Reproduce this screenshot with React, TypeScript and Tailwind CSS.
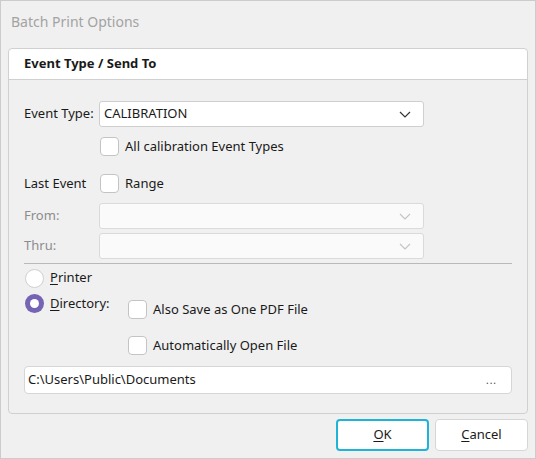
import React from "react";

const Chevron = ({ disabled }: { disabled?: boolean }) => (
  <svg width="12" height="7" viewBox="0 0 12 7" className="shrink-0">
    <path
      d="M1 1 L6 6 L11 1"
      fill="none"
      stroke={disabled ? "#c4c4c4" : "#333333"}
      strokeWidth="1.2"
    />
  </svg>
);

const Combo = ({ value, disabled }: { value?: string; disabled?: boolean }) => (
  <div
    className={`flex h-[26px] w-[325px] items-center justify-between rounded-[3px] border pl-[4px] pr-[12px] ${
      disabled ? "border-[#dadada] bg-[#fafafa]" : "border-[#cfcfcf] bg-white"
    }`}
  >
    <span className="text-[13px] text-[#1a1a1a]">{value}</span>
    <Chevron disabled={disabled} />
  </div>
);

const Check = () => (
  <div className="h-[19px] w-[19px] shrink-0 rounded-[4px] border border-[#c4c4c4] bg-white" />
);

export default function App() {
  return (
    <div
      className="flex h-[459px] w-[536px] flex-col border border-[#cccccc] bg-[#f0f0f0] text-[13px] text-[#1a1a1a]"
      style={{ fontFamily: '"Noto Sans", "Open Sans", sans-serif' }}
    >
      <div className="h-[47px] pl-[10px] pt-[10px] text-[14px] leading-[22px] text-[#a3a3a3]">
        Batch Print Options
      </div>

      <div className="mx-[7px] flex h-[366px] flex-col rounded-[4px] border border-[#d0d0d0]">
        <div className="flex h-[31px] items-center rounded-t-[4px] border-b border-[#d0d0d0] bg-white pl-[15px] text-[13px] font-bold">
          Event Type / Send To
        </div>

        <div className="flex flex-col pl-[15px] pr-[15px]">
          <div className="mt-[21px] flex items-center">
            <span className="w-[75px]">Event Type:</span>
            <Combo value="CALIBRATION" />
          </div>

          <div className="mt-[10px] flex items-center pl-[76px]">
            <Check />
            <span className="ml-[6px]">All calibration Event Types</span>
          </div>

          <div className="mt-[17px] flex items-center">
            <span className="w-[76px]">Last Event</span>
            <Check />
            <span className="ml-[6px]">Range</span>
          </div>

          <div className="mt-[10px] flex items-center">
            <span className="w-[75px] text-[#8c8c8c]">From:</span>
            <Combo disabled />
          </div>

          <div className="mt-[4px] flex items-center">
            <span className="w-[75px] text-[#8c8c8c]">Thru:</span>
            <Combo disabled />
          </div>

          <div className="mt-[4px] h-px bg-[#b9b9b9]" />

          <div className="mt-[4px] flex h-[20px] items-center">
            <div className="ml-[1px] h-[19px] w-[19px] rounded-full border border-[#cfcfcf] bg-white" />
            <span className="ml-[6px]">
              <u className="underline-offset-2">P</u>rinter
            </span>
          </div>

          <div className="mt-[6px] flex">
            <div className="flex h-[19px] w-[104px] items-center">
              <div className="ml-[1px] flex h-[19px] w-[19px] items-center justify-center rounded-full bg-[#7563b3]">
                <div className="h-[9px] w-[9px] rounded-full bg-white" />
              </div>
              <span className="ml-[6px]">
                <u className="underline-offset-2">D</u>irectory:
              </span>
            </div>
            <div className="flex flex-col pt-[6px]">
              <div className="flex items-center">
                <Check />
                <span className="ml-[6px]">Also Save as One PDF File</span>
              </div>
              <div className="mt-[16px] flex items-center">
                <Check />
                <span className="ml-[6px]">Automatically Open File</span>
              </div>
            </div>
          </div>

          <div className="mt-[11px] flex h-[28px] items-center justify-between rounded-[4px] border border-[#d6d6d6] bg-white pl-[3px] pr-[14px]">
            <span>C:\Users\Public\Documents</span>
            <span className="text-[10px] tracking-[1px] text-[#444]">...</span>
          </div>
        </div>
      </div>

      <div className="mr-[7px] mt-[5px] flex justify-end gap-[6px]">
        <button className="flex h-[32px] w-[93px] items-center justify-center rounded-[4px] border-2 border-[#1fb3d8] bg-white text-[13px]">
          <span>
            <u className="underline-offset-2">O</u>K
          </span>
        </button>
        <button className="flex h-[32px] w-[93px] items-center justify-center rounded-[4px] border border-[#d6d6d6] bg-white text-[13px]">
          <span>
            <u className="underline-offset-2">C</u>ancel
          </span>
        </button>
      </div>
    </div>
  );
}
